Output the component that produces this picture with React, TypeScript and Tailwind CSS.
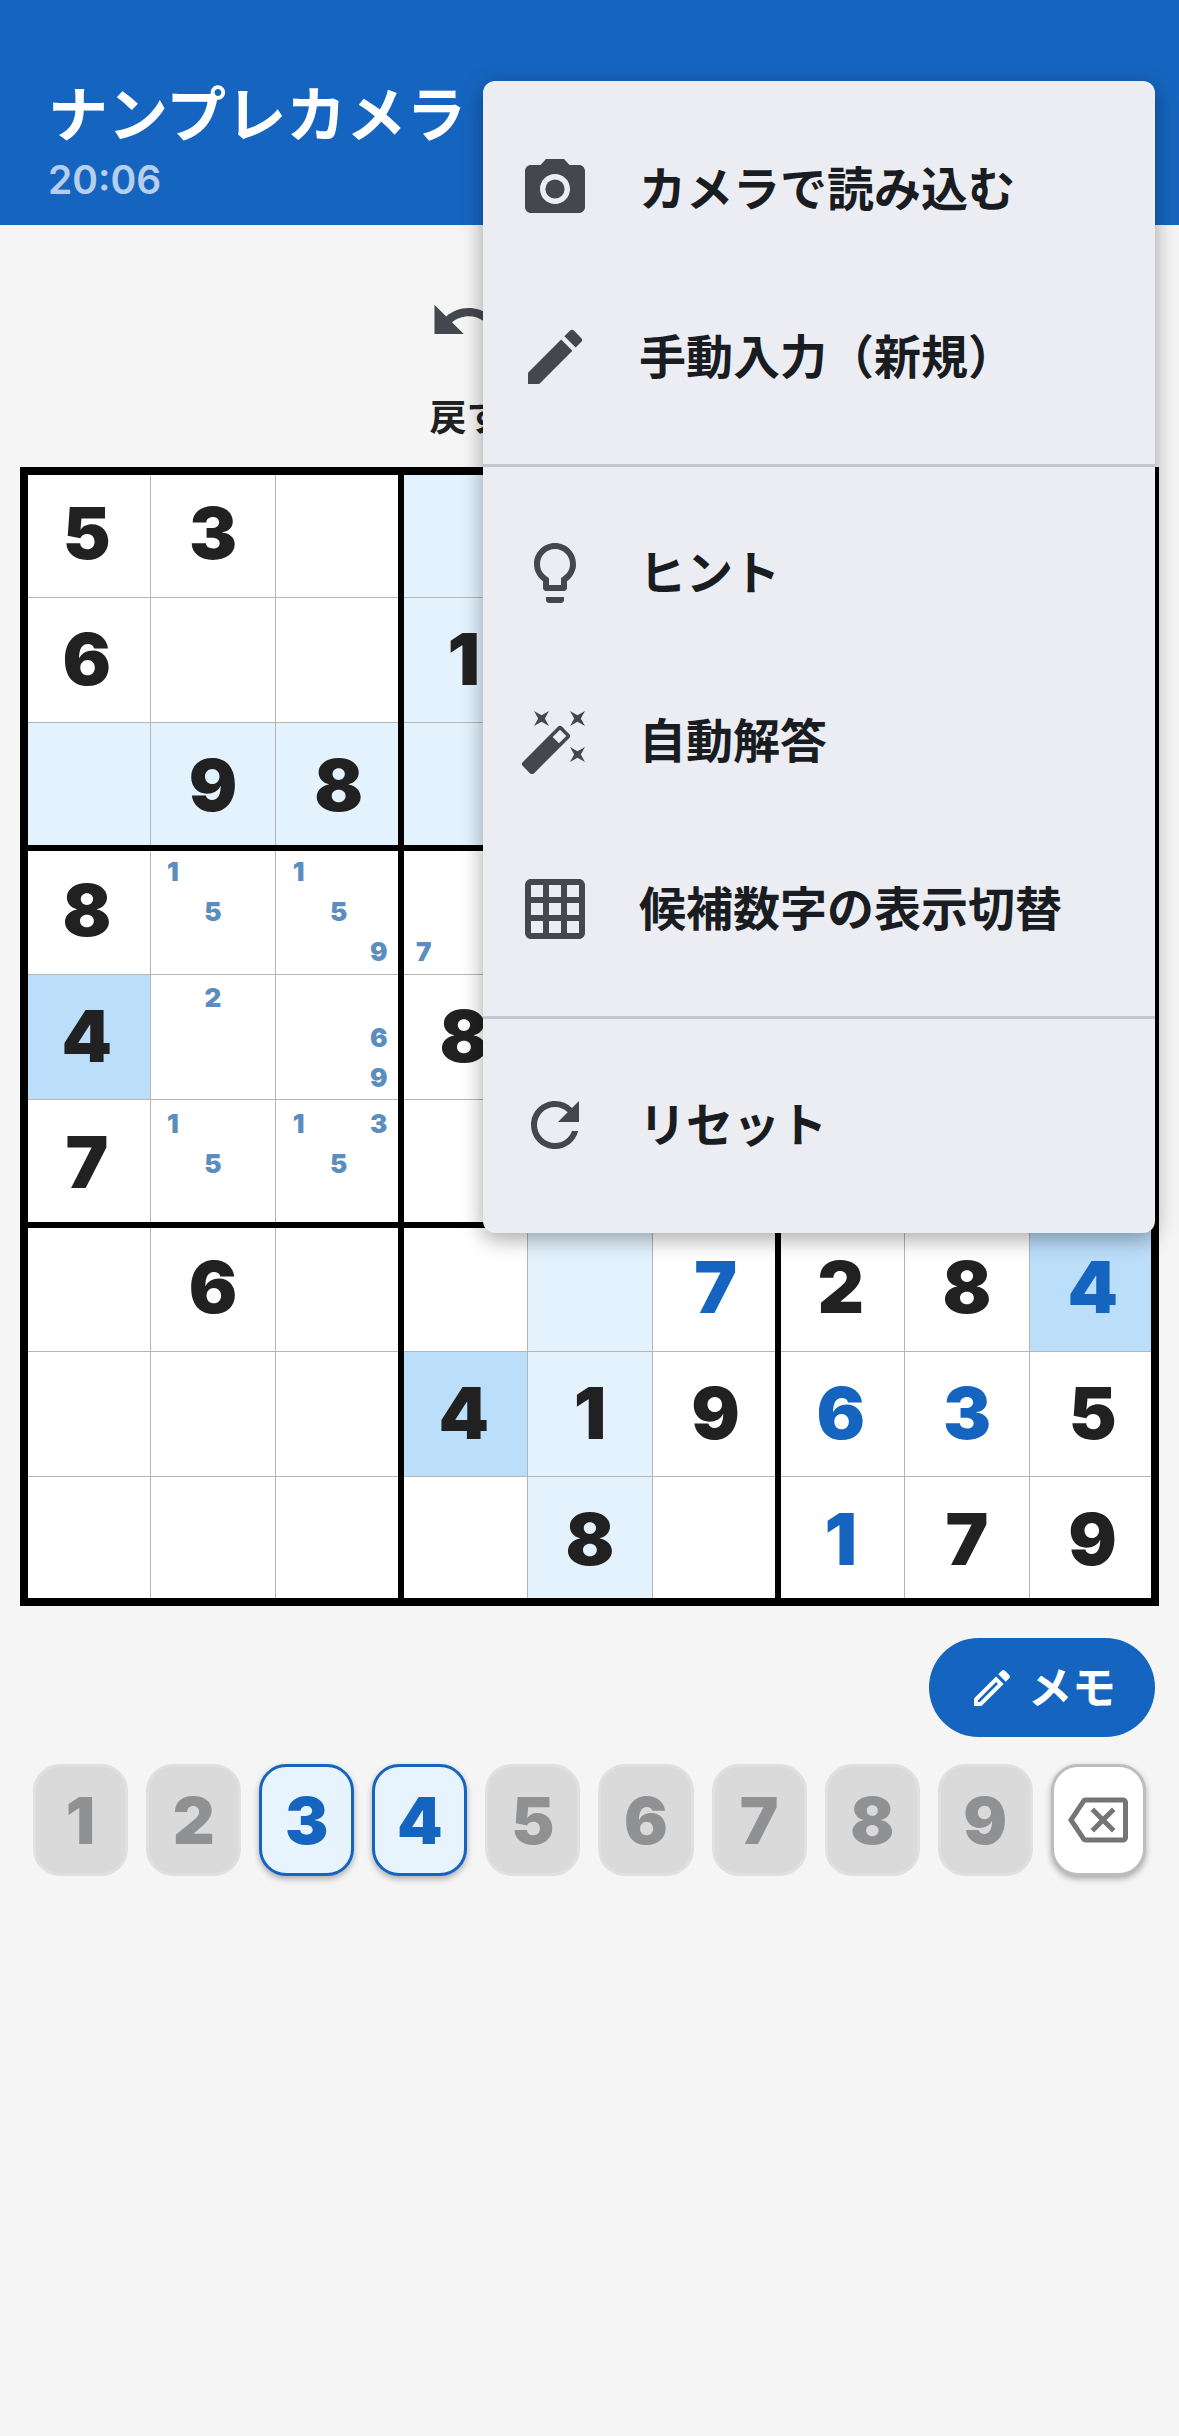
import clsx from 'clsx'
import {
  MdAutoFixHigh,
  MdCameraAlt,
  MdEdit,
  MdGridOn,
  MdLightbulbOutline,
  MdOutlineBackspace,
  MdOutlineEdit,
  MdRefresh,
  MdUndo,
} from 'react-icons/md'

// '.' is an empty cell
const board = [
  '53.......',
  '6..1.....',
  '.98......',
  '8........',
  '4..8.....',
  '7........',
  '.6...7284',
  '...419635',
  '....8.179',
]

const notes: Record<string, number[]> = {
  '3-1': [1, 5],
  '3-2': [1, 5, 9],
  '3-3': [7],
  '4-1': [2],
  '4-2': [6, 9],
  '5-1': [1, 5],
  '5-2': [1, 3, 5],
}

// cells filled in by the player
const entered = ['6-5', '6-8', '7-6', '7-7', '8-6']

const selected = { row: 2, col: 4 }
const sameDigit = '4'
const available = [3, 4]
const digits = [1, 2, 3, 4, 5, 6, 7, 8, 9]
const nine = [0, 1, 2, 3, 4, 5, 6, 7, 8]

const menu = [
  [
    { icon: MdCameraAlt, label: 'カメラで読み込む' },
    { icon: MdEdit, label: '手動入力（新規）' },
  ],
  [
    { icon: MdLightbulbOutline, label: 'ヒント' },
    { icon: MdAutoFixHigh, label: '自動解答' },
    { icon: MdGridOn, label: '候補数字の表示切替' },
  ],
  [{ icon: MdRefresh, label: 'リセット' }],
]

const isPeer = (row: number, col: number) =>
  row === selected.row ||
  col === selected.col ||
  (Math.floor(row / 3) === Math.floor(selected.row / 3) &&
    Math.floor(col / 3) === Math.floor(selected.col / 3))

const Cell = ({ row, col }: { row: number; col: number }) => {
  const key = `${row}-${col}`
  const digit = board[row][col]
  const marks = notes[key]

  return (
    <button
      className={clsx(
        'flex min-h-0 min-w-0 items-center justify-center border-[#b5b5b5] text-[72px] leading-none font-black',
        digit === sameDigit
          ? 'bg-[#bbdefb]'
          : isPeer(row, col)
            ? 'bg-[#e3f2fd]'
            : 'bg-white',
        entered.includes(key) ? 'text-[#1565c0]' : 'text-[#212121]',
        marks ? 'pt-0.5' : 'pb-0.5',
        col % 3 > 0 && 'border-l',
        row % 3 > 0 && 'border-t'
      )}
    >
      {digit !== '.' && digit}
      {marks && (
        <span className="grid h-[120px] w-[120px] shrink-0 grid-cols-3 grid-rows-3 text-[26px] text-[#5c8dbf]">
          {digits.map((n) => (
            <span key={n} className="flex items-center justify-center">
              {marks.includes(n) && n}
            </span>
          ))}
        </span>
      )}
    </button>
  )
}

const Block = ({ index }: { index: number }) => {
  const top = Math.floor(index / 3) * 3
  const left = (index % 3) * 3

  return (
    <div className="grid grid-cols-3 grid-rows-3 outline-6 -outline-offset-3 outline-black">
      {nine.map((i) => (
        <Cell key={i} row={top + Math.floor(i / 3)} col={left + (i % 3)} />
      ))}
    </div>
  )
}

const Key = ({ n }: { n: number }) => {
  const enabled = available.includes(n)

  return (
    <button
      disabled={!enabled}
      className={clsx(
        'flex h-28 flex-1 items-center justify-center rounded-[27px] border-3 text-[65px] leading-none font-black',
        enabled
          ? 'border-[#1565c0] bg-[#e7f3fd] text-[#1565c0] shadow-[0_3px_6px_rgba(0,0,0,0.3)]'
          : 'border-[#e0e0e0] bg-[#dadada] text-[#909193]'
      )}
    >
      {n}
    </button>
  )
}

const Menu = () => (
  <div
    role="menu"
    className="absolute top-[81px] right-6 w-[672px] rounded-xl bg-[#ecedf3] py-6 shadow-[0_6px_21px_rgba(0,0,0,0.35)]"
  >
    {menu.map((group, i) => (
      <div key={i}>
        {i > 0 && (
          <div className="flex h-12 items-center">
            <hr className="w-full border-t-3 border-[#c4c6d0]" />
          </div>
        )}
        {group.map(({ icon: Icon, label }) => (
          <button
            key={label}
            role="menuitem"
            className="flex h-42 w-full items-center gap-12 px-9 text-left"
          >
            <Icon className="size-18 shrink-0 text-[#44474e]" />
            <span className="text-[47px] leading-18 font-semibold text-[#191c20]">
              {label}
            </span>
          </button>
        ))}
      </div>
    ))}
  </div>
)

export default function App() {
  return (
    <div className="relative min-h-screen bg-[#f5f5f5] font-[Inter,'Noto_Sans_CJK_JP',sans-serif]">
      <header className="flex flex-col gap-[5px] bg-[#1565c0] px-12 pt-[79px] pb-[21px]">
        <h1 className="text-[60px] leading-18 font-semibold text-white">
          ナンプレカメラ
        </h1>
        <p className="text-[39px] leading-12 font-semibold text-white/70">
          20:06
        </p>
      </header>

      <main className="flex flex-col pt-[57px]">
        <div className="grid w-[492px] grid-cols-2 self-center">
          <button className="flex flex-col items-center gap-[34px] justify-self-center">
            <MdUndo className="size-[78px] text-[#44474e]" />
            <span className="text-[37px] leading-12 font-semibold text-[#212121]">
              戻す
            </span>
          </button>
        </div>

        <div className="mx-6 mt-[29px] grid aspect-square grid-cols-3 grid-rows-3 outline-8 -outline-offset-4 outline-black">
          {nine.map((i) => (
            <Block key={i} index={i} />
          ))}
        </div>

        <button className="mt-9 mr-6 flex h-[99px] items-center gap-3 self-end rounded-full bg-[#1565c0] px-[39px] text-white">
          <MdOutlineEdit className="size-12" />
          <span className="text-[44px] leading-none font-semibold">メモ</span>
        </button>

        <div className="mt-[27px] flex gap-[18px] px-[33px]">
          {digits.map((n) => (
            <Key key={n} n={n} />
          ))}
          <button
            aria-label="削除"
            className="flex h-28 flex-1 items-center justify-center rounded-[27px] border-3 border-[#bdbdbd] bg-white shadow-[0_3px_6px_rgba(0,0,0,0.3)]"
          >
            <MdOutlineBackspace className="size-[60px] text-[#757575]" />
          </button>
        </div>
      </main>

      <Menu />
    </div>
  )
}
